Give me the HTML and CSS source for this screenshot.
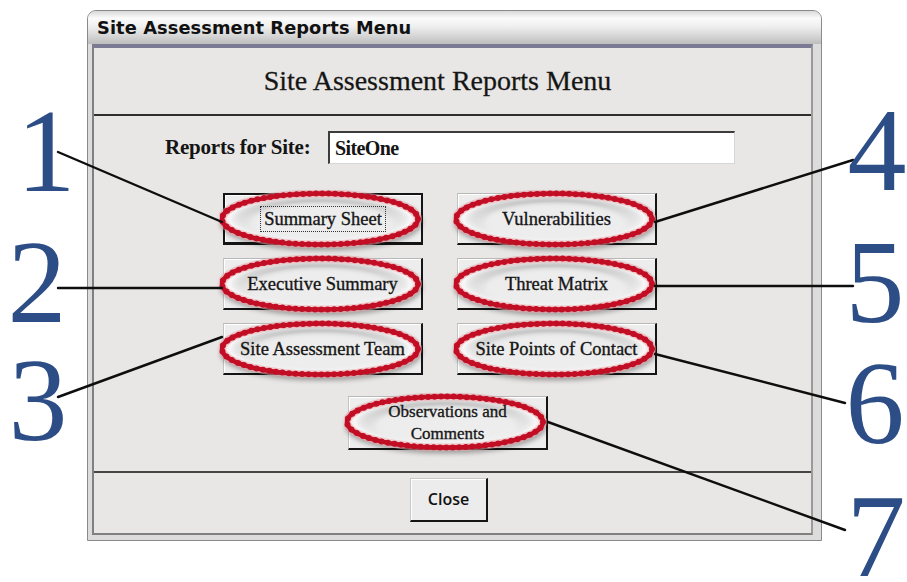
FILE: index.html
```html
<!DOCTYPE html>
<html>
<head>
<meta charset="utf-8">
<title>Site Assessment Reports Menu</title>
<link rel="stylesheet" href="styles.css">
</head>
<body>
<div class="page">
  <div class="window">
    <div class="titlebar">Site Assessment Reports Menu</div>
    <div class="frame">
      <div class="content">
        <div class="header">Site Assessment Reports Menu</div>
        <div class="site-row">
          <label class="site-label">Reports for Site:</label>
          <div class="site-input">SiteOne</div>
        </div>
        <div class="grid">
          <div class="btn default"><span class="focus">Summary Sheet</span><svg class="oval" width="204" height="58"><use href="#ovalShape"/></svg></div>
          <div class="btn">Vulnerabilities<svg class="oval" width="204" height="58"><use href="#ovalShape"/></svg></div>
          <div class="btn">Executive Summary<svg class="oval" width="204" height="58"><use href="#ovalShape"/></svg></div>
          <div class="btn">Threat Matrix<svg class="oval" width="204" height="58"><use href="#ovalShape"/></svg></div>
          <div class="btn">Site Assessment Team<svg class="oval" width="204" height="58"><use href="#ovalShape"/></svg></div>
          <div class="btn">Site Points of Contact<svg class="oval" width="204" height="58"><use href="#ovalShape"/></svg></div>
        </div>
        <div class="obs-row">
          <div class="btn two-line">Observations and<br>Comments<svg class="oval" width="204" height="58"><use href="#ovalShape"/></svg></div>
        </div>
        <div class="footer">
          <div class="close-btn">Close</div>
        </div>
      </div>
    </div>
  </div>

  <svg class="annotations" width="907" height="582" viewBox="0 0 907 582">
    <defs>
      <radialGradient id="glow" cx="50%" cy="50%" r="50%">
        <stop offset="0.7" stop-color="#ffffff" stop-opacity="0"/>
        <stop offset="0.92" stop-color="#ffffff" stop-opacity="0.9"/>
        <stop offset="1" stop-color="#f6d8d8" stop-opacity="1"/>
      </radialGradient>
      <g id="ovalShape">
        <ellipse cx="101" cy="29" rx="98" ry="25.5" fill="url(#glow)"/>
        <ellipse cx="101" cy="29" rx="98" ry="25.5" fill="none" stroke="#e9a3a8" stroke-width="8" stroke-opacity="0.55"/>
        <ellipse cx="101" cy="29" rx="98" ry="25.5" fill="none" stroke="#c20e24" stroke-width="4.4"/>
        <ellipse cx="101" cy="29" rx="98" ry="25.5" fill="none" stroke="#c20e24" stroke-width="6" stroke-dasharray="0 6.5" stroke-linecap="round"/>
      </g>
    </defs>
    <g class="leaders">
      <line x1="58" y1="152" x2="222" y2="222"/>
      <line x1="58" y1="288" x2="222" y2="288"/>
      <line x1="58" y1="397" x2="222" y2="337"/>
      <line x1="655" y1="222" x2="853" y2="160"/>
      <line x1="655" y1="286" x2="853" y2="286"/>
      <line x1="655" y1="354" x2="845" y2="403"/>
      <line x1="548" y1="422" x2="845" y2="530"/>
    </g>
    <g class="digits">
      <text x="46" y="191">1</text>
      <text x="37" y="322">2</text>
      <text x="38" y="440">3</text>
      <text x="877" y="190">4</text>
      <text x="875" y="322">5</text>
      <text x="875" y="443">6</text>
      <text x="876" y="576">7</text>
    </g>
  </svg>
</div>
</body>
</html>
```

FILE: styles.css
```css
html, body {
  margin: 0;
  padding: 0;
  background: #ffffff;
}

.page {
  position: relative;
  width: 907px;
  height: 582px;
  overflow: hidden;
  padding-top: 10px;
  box-sizing: border-box;
}

.window {
  margin-left: 87px;
  width: 735px;
  height: 531px;
  box-sizing: border-box;
  border: 1px solid #8a8a8a;
  border-radius: 9px 9px 0 0;
  background: #dcdcdc;
  display: flex;
  flex-direction: column;
  overflow: hidden;
}

.titlebar {
  height: 33px;
  flex: none;
  box-sizing: border-box;
  padding: 6px 0 0 9px;
  background: linear-gradient(#d9d9d9 0%, #fbfbfb 22%, #f0f0f0 45%, #d6d6d6 75%, #bdbdbd 100%);
  font-family: "DejaVu Sans", Verdana, sans-serif;
  font-weight: bold;
  font-size: 17.8px;
  color: #111;
  letter-spacing: 0.1px;
}

.frame {
  flex: 1;
  padding: 0 8px 5px 4px;
  display: flex;
}

.content {
  flex: 1;
  background: #e8e7e5;
  border-top: 4px solid #7b7a95;
  border-left: 2px solid #808080;
  border-right: 2px solid #9a9a9a;
  border-bottom: 2px solid #808080;
  display: flex;
  flex-direction: column;
  font-family: "Liberation Serif", "Times New Roman", serif;
  color: #141414;
}

.header {
  height: 68px;
  box-sizing: border-box;
  display: flex;
  align-items: center;
  justify-content: center;
  font-size: 28px;
  padding-right: 30px;
  border-bottom: 2px solid #2e2e2e;
  -webkit-text-stroke: 0.3px #222;
}

.site-row {
  margin-top: 15px;
  padding-left: 71px;
  display: grid;
  grid-template-columns: 163px 407px;
  align-items: center;
}

.site-label {
  font-weight: bold;
  font-size: 21px;
  letter-spacing: -0.2px;
}

.site-input {
  height: 33px;
  box-sizing: border-box;
  background: #ffffff;
  border-top: 2px solid #3c3c3c;
  border-left: 2px solid #3c3c3c;
  border-right: 1px solid #d6d6d6;
  border-bottom: 1px solid #d6d6d6;
  padding: 4px 0 0 5px;
  font-weight: bold;
  font-size: 20px;
  letter-spacing: -0.6px;
}

.grid {
  margin-top: 29px;
  margin-left: 129px;
  display: grid;
  grid-template-columns: 200px 200px;
  column-gap: 34px;
  row-gap: 13px;
}

.btn {
  position: relative;
  isolation: isolate;
  height: 52px;
  box-sizing: border-box;
  background: #ededed;
  border-top: 1px solid #b8b8b8;
  border-left: 1px solid #c4c4c4;
  border-right: 2px solid #151515;
  border-bottom: 2px solid #151515;
  box-shadow: inset 1px 1px 0 #ffffff;
  display: flex;
  align-items: center;
  justify-content: center;
  text-align: center;
  font-size: 18.5px;
  line-height: 22px;
  -webkit-text-stroke: 0.35px #1a1a1a;
}

.btn.default {
  border: 2px solid #151515;
  border-bottom-width: 3px;
}

.focus {
  position: relative;
  z-index: 1;
  outline: 1px dotted #333;
  outline-offset: 1px;
  padding: 0 2px;
}

.oval {
  position: absolute;
  left: -5px;
  top: -4px;
  z-index: -1;
  filter: drop-shadow(1px 3px 2px rgba(0, 0, 0, 0.3));
  pointer-events: none;
}

.btn.default .oval {
  left: -6px;
  top: -5px;
}

.obs-row {
  margin-top: 21px;
  margin-left: 254px;
  display: flex;
}

.two-line {
  width: 200px;
  height: 54px;
  font-size: 17px;
  line-height: 22px;
}

.footer {
  margin-top: 21px;
  border-top: 2px solid #454545;
  padding-top: 5px;
  padding-left: 316px;
  display: flex;
}

.close-btn {
  width: 78px;
  height: 44px;
  box-sizing: border-box;
  background: #ececec;
  border-top: 1px solid #c8c8c8;
  border-left: 1px solid #c8c8c8;
  border-right: 2px solid #151515;
  border-bottom: 2px solid #151515;
  box-shadow: inset 1px 1px 0 #ffffff;
  display: flex;
  align-items: center;
  justify-content: center;
  font-family: "Open Sans", "DejaVu Sans", sans-serif;
  font-size: 16px;
  font-weight: 600;
  color: #111;
  padding-bottom: 2px;
}

.annotations {
  position: absolute;
  left: 0;
  top: 0;
  pointer-events: none;
}

.leaders line {
  stroke: #0e0e0e;
  stroke-width: 2.4;
  stroke-linecap: round;
}

.digits text {
  font-family: "Liberation Serif", "Times New Roman", serif;
  font-size: 118px;
  fill: #2c4d86;
  text-anchor: middle;
}
```
